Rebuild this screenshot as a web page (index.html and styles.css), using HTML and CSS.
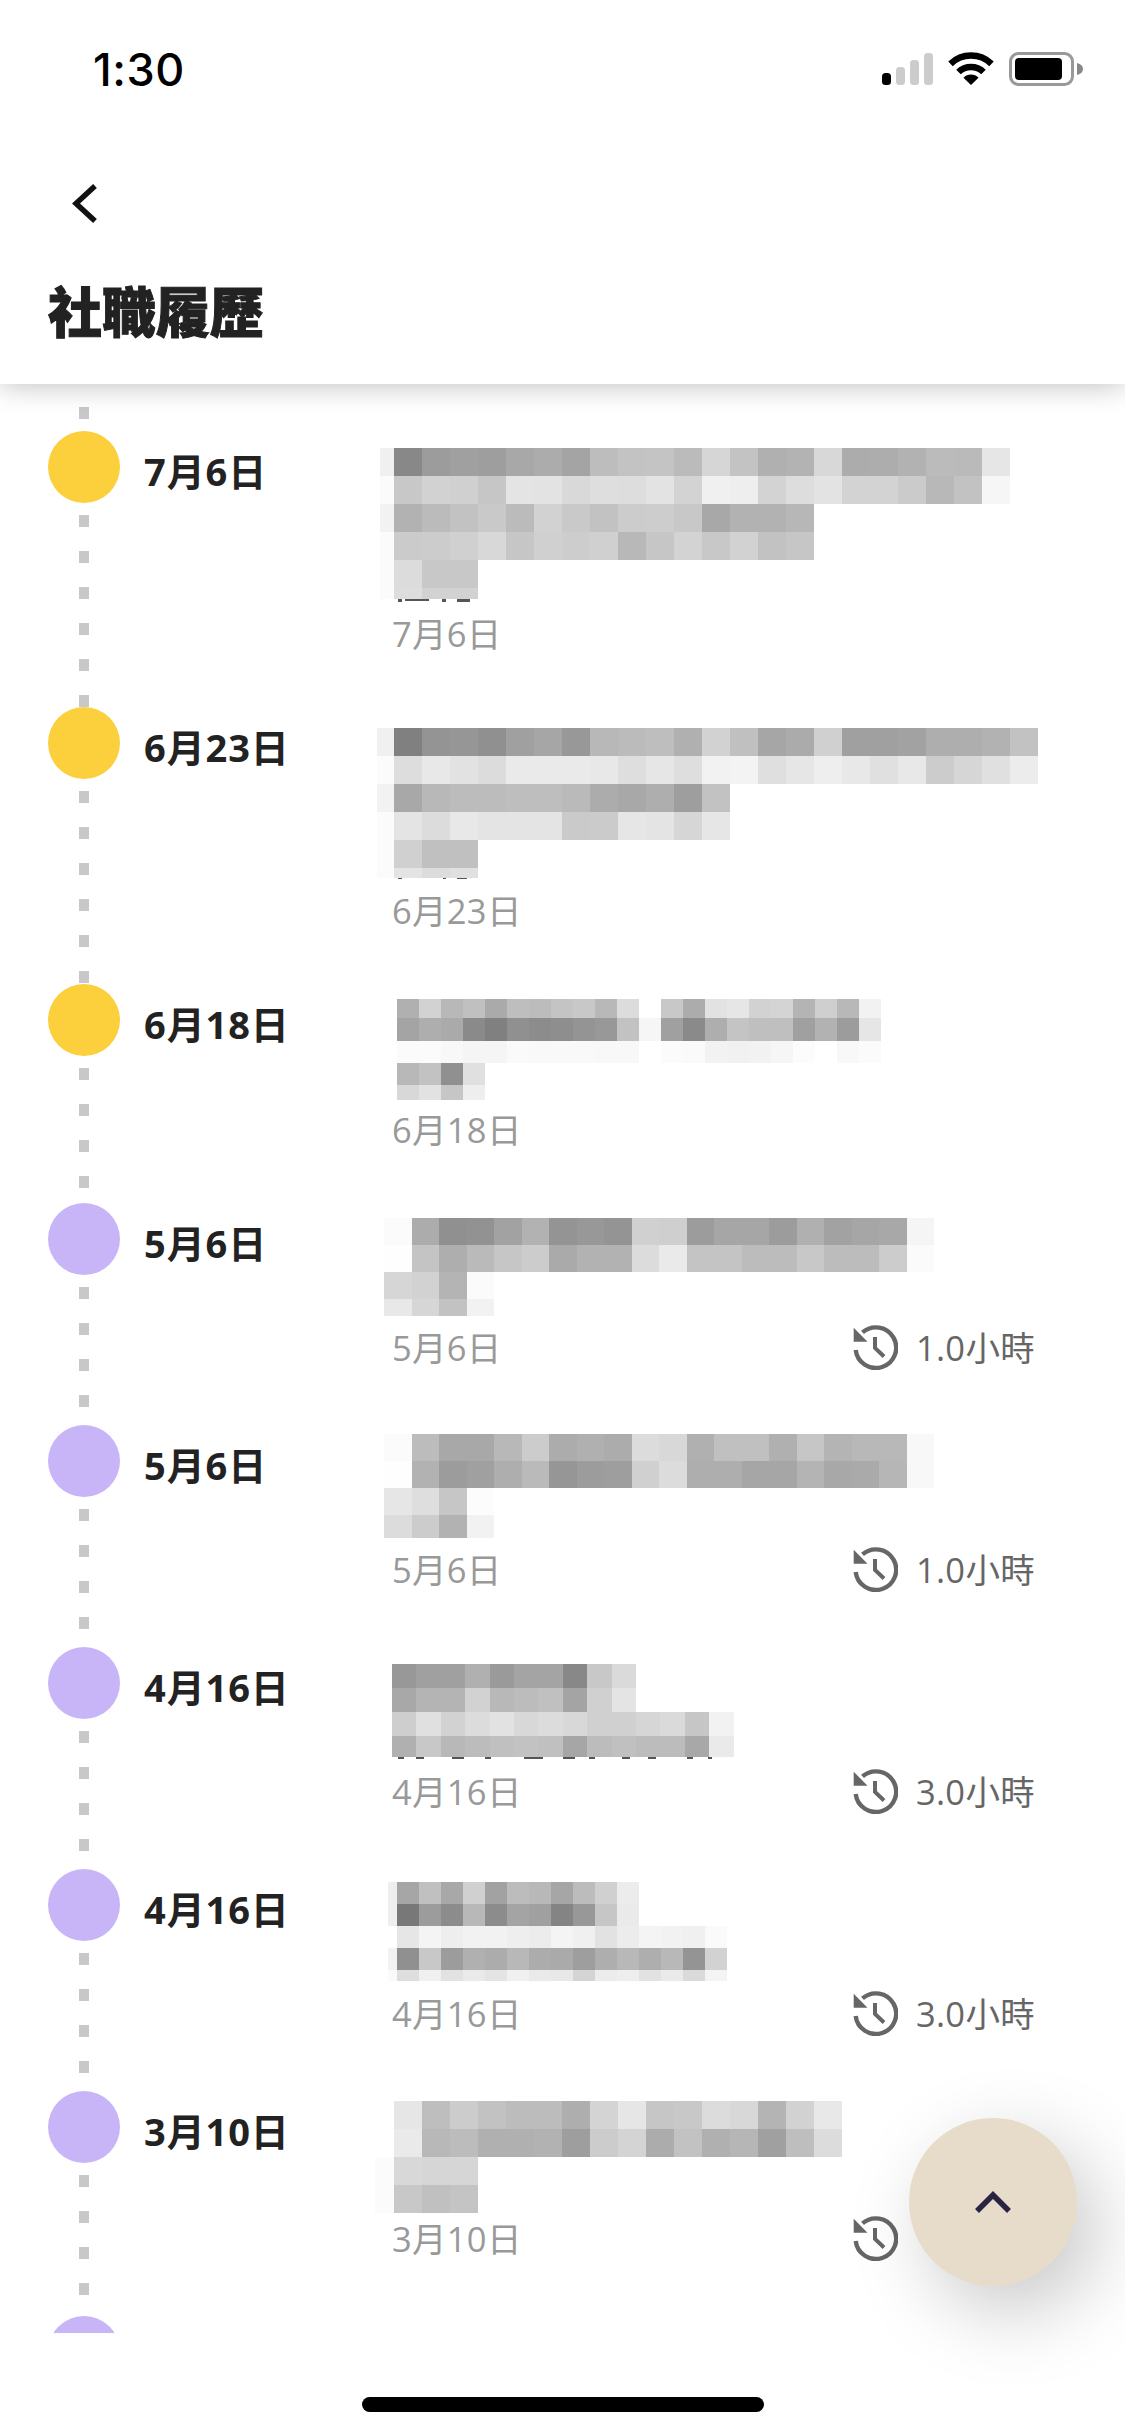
FILE: index.html
```html
<!DOCTYPE html>
<html lang="zh-Hant">
<head>
  <meta charset="UTF-8">
  <title>社職履歷</title>
  <link rel="stylesheet" href="styles.css">
</head>
<body>

  <svg class="defs" width="0" height="0">
    <symbol id="history" viewBox="0 0 45 45">
      <path d="M9.5 7.4A20.3 20.3 0 1 1 2.7 25" fill="none" stroke="#666" stroke-width="4.4"/>
      <path d="M.7 2.7V16.7H14.5Z" fill="#666"/>
      <path d="M22 12V23L31 31.5" fill="none" stroke="#666" stroke-width="4"/>
    </symbol>
  </svg>

  <header class="header">
    <div class="status">
      <span class="time">1:30</span>
      <svg class="status-icons" width="201" height="34" viewBox="0 0 201 34">
        <rect x="0" y="21" width="9" height="12" rx="3.5" fill="#000"/>
        <rect x="14" y="15" width="9" height="18" rx="3.5" fill="#ccc"/>
        <rect x="28" y="8" width="9" height="25" rx="3.5" fill="#ccc"/>
        <rect x="42" y="1" width="9" height="32" rx="3.5" fill="#ccc"/>
        <path d="M68.5 11.8A29.5 29.5 0 0 1 109.5 11.8" fill="none" stroke="#000" stroke-width="6.5"/>
        <path d="M76.5 20A18 18 0 0 1 101.5 20" fill="none" stroke="#000" stroke-width="6.5"/>
        <path d="M89 33L81.5 25.7A10.5 10.5 0 0 1 96.5 25.7Z" fill="#000"/>
        <rect x="128.5" y="1.5" width="62" height="31" rx="8" fill="none" stroke="#999" stroke-width="3"/>
        <rect x="133" y="6" width="47" height="22" rx="4" fill="#000"/>
        <path d="M195 11C199 12 201 14 201 17S199 22 195 23Z" fill="#888"/>
      </svg>
    </div>
    <svg class="back" width="40" height="46" viewBox="0 0 40 46">
      <path d="M23 4L4 21.5L23 39" fill="none" stroke="#111" stroke-width="5.5"/>
    </svg>
    <h1 class="title">社職履歷</h1>
  </header>

  <main class="timeline">
    <div class="lead-dash"></div>

    <div class="entry entry-plain">
      <div class="marker"><span class="dot dot-yellow"></span><span class="dash"></span></div>
      <div class="date">7月6日</div>
      <div class="body">
        <svg class="mosaic" data-m="0"></svg>
        <div class="meta"><span class="when">7月6日</span></div>
      </div>
    </div>

    <div class="entry entry-plain">
      <div class="marker"><span class="dot dot-yellow"></span><span class="dash"></span></div>
      <div class="date">6月23日</div>
      <div class="body">
        <svg class="mosaic" data-m="1"></svg>
        <div class="meta"><span class="when">6月23日</span></div>
      </div>
    </div>

    <div class="entry entry-plain">
      <div class="marker"><span class="dot dot-yellow"></span><span class="dash"></span></div>
      <div class="date">6月18日</div>
      <div class="body">
        <svg class="mosaic" data-m="2"></svg>
        <div class="meta"><span class="when">6月18日</span></div>
      </div>
    </div>

    <div class="entry">
      <div class="marker"><span class="dot dot-purple"></span><span class="dash"></span></div>
      <div class="date">5月6日</div>
      <div class="body">
        <svg class="mosaic" data-m="3"></svg>
        <div class="meta">
          <span class="when">5月6日</span>
          <span class="hours"><svg width="45" height="45"><use href="#history"/></svg>1.0小時</span>
        </div>
      </div>
    </div>

    <div class="entry">
      <div class="marker"><span class="dot dot-purple"></span><span class="dash"></span></div>
      <div class="date">5月6日</div>
      <div class="body">
        <svg class="mosaic" data-m="4"></svg>
        <div class="meta">
          <span class="when">5月6日</span>
          <span class="hours"><svg width="45" height="45"><use href="#history"/></svg>1.0小時</span>
        </div>
      </div>
    </div>

    <div class="entry">
      <div class="marker"><span class="dot dot-purple"></span><span class="dash"></span></div>
      <div class="date">4月16日</div>
      <div class="body">
        <svg class="mosaic" data-m="5"></svg>
        <div class="meta">
          <span class="when">4月16日</span>
          <span class="hours"><svg width="45" height="45"><use href="#history"/></svg>3.0小時</span>
        </div>
      </div>
    </div>

    <div class="entry">
      <div class="marker"><span class="dot dot-purple"></span><span class="dash"></span></div>
      <div class="date">4月16日</div>
      <div class="body">
        <svg class="mosaic" data-m="6"></svg>
        <div class="meta">
          <span class="when">4月16日</span>
          <span class="hours"><svg width="45" height="45"><use href="#history"/></svg>3.0小時</span>
        </div>
      </div>
    </div>

    <div class="entry">
      <div class="marker"><span class="dot dot-purple"></span><span class="dash"></span></div>
      <div class="date">3月10日</div>
      <div class="body">
        <svg class="mosaic" data-m="7"></svg>
        <div class="meta">
          <span class="when">3月10日</span>
          <span class="hours"><svg width="45" height="45"><use href="#history"/></svg>1.0小時</span>
        </div>
      </div>
    </div>

    <div class="entry">
      <div class="marker"><span class="dot dot-purple"></span></div>
    </div>
  </main>

  <footer class="home-bar"><span class="home-indicator"></span></footer>

  <button class="to-top">
    <svg width="44" height="32" viewBox="0 0 44 32">
      <path d="M6 25L22 9L38 25" fill="none" stroke="#2a2344" stroke-width="5.5"/>
    </svg>
  </button>

  <script src="mosaic.js"></script>
</body>
</html>
```

FILE: styles.css
```css
* { box-sizing: border-box; }
html, body { margin: 0; }
body {
  width: 1125px;
  height: 2436px;
  overflow: hidden;
  position: relative;
  display: flex;
  flex-direction: column;
  background: #fff;
  color: #222;
  font-family: "Open Sans", "Noto Sans CJK TC", sans-serif;
}
.defs { position: absolute; }

.header {
  height: 384px;
  flex: none;
  padding-top: 52px;
  background: #fff;
  box-shadow: 0 0 28px rgba(0, 0, 0, .28);
  position: relative;
  z-index: 2;
}
.status {
  display: flex;
  justify-content: space-between;
  align-items: center;
  height: 34px;
  padding: 0 42px 0 93px;
}
.time {
  font-family: Inter, "Liberation Sans", sans-serif;
  font-size: 45px;
  font-weight: 550;
  letter-spacing: .6px;
  color: #000;
}
.back {
  display: block;
  margin: 96px 0 0 72px;
}
.title {
  margin: 0;
  padding: 52px 0 0 48px;
  font-family: "Noto Sans CJK TC", sans-serif;
  font-size: 54px;
  font-weight: 900;
  line-height: 60px;
  color: #222;
  -webkit-text-stroke: 1px #222;
}

.timeline {
  flex: 1;
  overflow: hidden;
  padding: 23px 90px 0 48px;
}
.lead-dash {
  width: 10px;
  height: 12px;
  margin: 0 0 12px 31px;
  background: #c8c8c8;
}
.entry { display: flex; }
.marker {
  width: 72px;
  flex: none;
  display: flex;
  flex-direction: column;
  align-items: center;
}
.dot {
  width: 72px;
  height: 72px;
  flex: none;
  border-radius: 50%;
}
.dot-yellow { background: #fccf3c; }
.dot-purple { background: #c8b5f8; }
.dash {
  flex: 1;
  width: 10px;
  margin-top: 12px;
  background: repeating-linear-gradient(#c8c8c8 0 12px, transparent 12px 36px);
}
.date {
  width: 232px;
  flex: none;
  margin-left: 24px;
  padding-top: 16px;
  font-size: 38px;
  font-weight: 700;
  line-height: 48px;
  letter-spacing: .9px;
}
.body {
  flex: 1;
  padding-bottom: 52px;
}
.entry-plain .body { padding-bottom: 49px; }
.mosaic {
  display: block;
  overflow: visible;
}
.meta {
  display: flex;
  justify-content: space-between;
  align-items: center;
  min-height: 48px;
  padding-left: 16px;
  font-size: 34.5px;
  line-height: 48px;
  letter-spacing: .3px;
}
.when { color: #999; }
.hours {
  display: flex;
  align-items: center;
  gap: 18px;
  height: 51px;
  color: #666;
}

.home-bar {
  height: 103px;
  flex: none;
  background: #fff;
  padding: 64px 0 0 362px;
  position: relative;
  z-index: 2;
}
.home-indicator {
  display: block;
  width: 402px;
  height: 15px;
  border-radius: 8px;
  background: #000;
}

.to-top {
  position: absolute;
  left: 909px;
  top: 2118px;
  z-index: 3;
  width: 168px;
  height: 168px;
  padding: 0;
  border: none;
  border-radius: 50%;
  background: #e6dcc9;
  box-shadow: 20px 25px 80px rgba(0, 0, 0, .22);
  display: flex;
  align-items: center;
  justify-content: center;
}
```

FILE: mosaic.js
```js
// blurred-out text blocks: each row is [height, left pad grey or "", cell greys]
const ROW28 = 28;
const mosaics = [
  {
    h: 179, y: 17, x0: 394, cell: 28, pad: 380,
    rows: [
      [ROW28, "f0", "88 9c a0 9e a8 ac a4 bd c3 c4 bb d6 c3 b0 b3 d8 ac ad b2 bb ba e6"],
      [ROW28, "fb", "c8 d2 d0 c6 e4 e3 d9 de dd e3 d3 f0 ee d3 dd e3 d3 d3 cb b8 c2 f6"],
      [ROW28, "f2", "b2 bb c2 c9 bb d2 c9 c2 cc cd c8 a8 b2 b2 b7"],
      [ROW28, "fb", "cb cc d0 d8 c6 d0 cd d0 b8 c6 d3 c8 d2 c2 c6"],
      [ROW28, "fb", "dc c8 c8"],
      [11, "fb", "dd d2 d2"]
    ],
    marks: [[398, 168, 4, 3], [405, 168, 24, 2], [442, 168, 4, 3], [457, 168, 13, 3]]
  },
  {
    h: 180, y: 21, x0: 394, cell: 28, pad: 377,
    rows: [
      [ROW28, "f0", "80 94 96 90 a0 a6 98 b8 bb be b0 d2 c0 a6 ab d0 a0 a0 a2 ae ae b2 c2"],
      [ROW28, "fb", "dd e8 e2 dc ea ea ea e8 de e6 de f2 f3 df e6 ee e8 e0 e8 cc d6 e0 ec"],
      [ROW28, "f2", "a8 b8 bc bc be be ba ac a8 ae 9e c2"],
      [ROW28, "fb", "e4 dc e8 e4 e4 e4 ca cb e6 e4 d6 e6"],
      [ROW28, "fb", "d0 c0 c0"],
      [10, "fb", "e4 dc e0"]
    ],
    marks: [[398, 171, 4, 1], [443, 171, 3, 1], [457, 171, 10, 1]]
  },
  {
    h: 122, y: 15, x0: 397, cell: 22, pad: null,
    rows: [
      [19, "", "b0 d2 b8 c0 aa be bc c4 c8 b8 dc ff c8 ac e2 e6 d2 d4 b4 cf b8 f2"],
      [23, "", "a4 ae aa 8a 80 90 8c 8e 94 98 c2 f6 a0 8a ae c4 bf bf a0 b2 9c e6"],
      [22, "", "fb fb f8 f5 f5 fa f9 f9 f9 f8 f8 ff fb fa f2 f1 f2 f6 fc ff f8 fb"],
      [22, "", "b8 c2 90 e0"],
      [15, "", "d8 e2 c6 ee"]
    ]
  },
  {
    h: 119, y: 15, x0: 384, cell: 27.5, pad: null,
    rows: [
      [27, "", "fb ac 90 92 a2 b2 94 98 94 d0 cf 9c a6 a6 9c b0 a2 a6 a8 f5"],
      [27, "", "fe c4 ae ba c6 cc aa b2 b2 dc ea c4 c4 bc bc c8 bc bc cc fb"],
      [27, "", "d6 d2 b4 fb"],
      [17, "", "e8 d6 c2 f2"]
    ]
  },
  {
    h: 119, y: 9, x0: 384, cell: 27.5, pad: null,
    rows: [
      [27, "", "fb bc a8 a8 b8 cc ac b0 ac dc d8 b0 c0 c0 b0 c6 b4 b8 b8 f8"],
      [27, "", "fe b2 9c a0 ae ba 96 9c 9e d0 dc ae ae a6 a6 b4 a8 aa b6 f8"],
      [27, "", "e6 de c6 fc"],
      [23, "", "dc cc b2 f2"]
    ]
  },
  {
    h: 119, y: 17, x0: 392, cell: 24.4, pad: null,
    rows: [
      [24, "", "98 a0 a0 b0 9a a4 a4 88 c8 da"],
      [24, "", "a8 b4 b4 d2 b8 bc c0 a4 d0 e4"],
      [24, "", "ce e0 d2 dc e2 d8 dc d8 d0 d0 d6 da c6 f2"],
      [21, "", "b0 c8 b8 bc c0 c2 c0 a6 bc c0 bc bc a8 ea"]
    ],
    marks: [[398, 110, 6, 2], [416, 110, 8, 2], [452, 110, 12, 2], [485, 110, 6, 2], [524, 110, 19, 2],
            [563, 110, 12, 2], [589, 110, 6, 2], [622, 110, 8, 2], [648, 110, 8, 2], [687, 110, 6, 2], [708, 110, 4, 2]]
  },
  {
    h: 119, y: 13, x0: 397, cell: 22, pad: 388,
    rows: [
      [22, "ee", "a6 c0 a8 d0 a2 bc b8 a6 bc d0 ec"],
      [22, "ee", "78 9c 8c b8 8c a4 a0 84 98 c6 ea"],
      [22, "", "e6 f4 ee f2 f2 ee ec f4 f0 e2 ec f4 f2 f0 fa"],
      [22, "f2", "90 c8 9c b0 ac b8 ac aa 9e ae b8 ae b8 94 d2"],
      [11, "fa", "de f0 e2 ea e4 f0 ea e8 d4 ec ee e2 ea da f4"]
    ]
  },
  {
    h: 122, y: 10, x0: 394, cell: 28, pad: 375,
    rows: [
      [28, "", "e6 be cc c2 bc bc ae d4 e6 c6 c8 dc d8 b4 d2 e8"],
      [28, "", "ea b8 bc b0 b0 b2 9e cc d4 ac c2 b0 b6 a0 be dc"],
      [28, "fb", "d8 d6 d6"],
      [28, "fb", "c8 c0 c4"]
    ]
  }
];

const BODY_LEFT = 376;
const NS = "http://www.w3.org/2000/svg";

function addRect(svg, x, y, w, h, fill) {
  const r = document.createElementNS(NS, "rect");
  r.setAttribute("x", x - BODY_LEFT);
  r.setAttribute("y", y);
  r.setAttribute("width", w);
  r.setAttribute("height", h);
  r.setAttribute("fill", fill);
  r.setAttribute("shape-rendering", "crispEdges");
  svg.appendChild(r);
}

document.querySelectorAll(".mosaic").forEach((svg) => {
  const m = mosaics[svg.dataset.m];
  svg.setAttribute("width", 657);
  svg.setAttribute("height", m.h);

  (m.marks || []).forEach(([x, y, w, h]) => addRect(svg, x, y, w, h, "#555"));

  let y = m.y;
  m.rows.forEach(([rowH, pad, cells]) => {
    if (pad) addRect(svg, m.pad, y, m.x0 - m.pad, rowH, "#" + pad.repeat(3));
    cells.split(" ").forEach((grey, i) => {
      addRect(svg, m.x0 + i * m.cell, y, m.cell, rowH, "#" + grey.repeat(3));
    });
    y += rowH;
  });
});
```
